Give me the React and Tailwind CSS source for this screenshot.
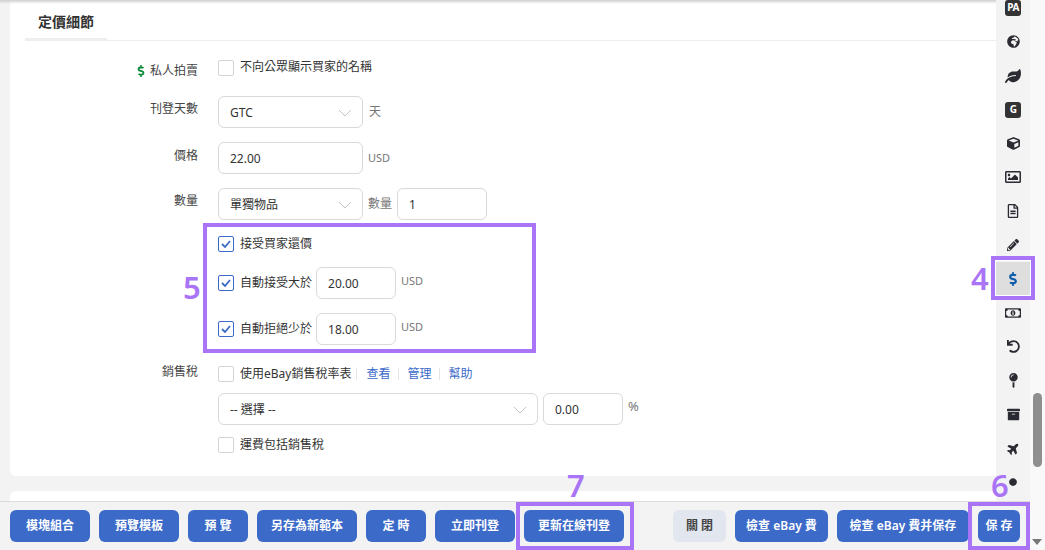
import {
  FaGlobeAfrica,
  FaLeaf,
  FaCube,
  FaRegImage,
  FaRegFileAlt,
  FaPencilAlt,
  FaDollarSign,
  FaRegMoneyBillAlt,
  FaUndo,
  FaMapPin,
  FaArchive,
  FaPlane,
  FaCircle,
} from "react-icons/fa";

const Chevron = () => (
  <svg width="14" height="8" viewBox="0 0 14 8" className="shrink-0">
    <polyline points="1,1 7,7 13,1" fill="none" stroke="#c4c4c4" strokeWidth="1" />
  </svg>
);

const Checkbox = ({ checked }) => (
  <span
    className={`flex h-4 w-4 shrink-0 items-center justify-center rounded-[2px] border bg-white ${
      checked ? "border-[#3b6ac9]" : "border-[#d4d4d4]"
    }`}
  >
    {checked && (
      <svg width="10" height="8" viewBox="0 0 10 8">
        <polyline points="1,4 4,7 9,1" fill="none" stroke="#3b6ac9" strokeWidth="1.8" />
      </svg>
    )}
  </span>
);

const Input = ({ value, className }) => (
  <div className={`flex h-8 items-center rounded-md border border-[#d9d9d9] bg-white pt-px pl-[11px] text-[12px] text-[#333] ${className}`}>
    {value}
  </div>
);

const Select = ({ value, className }) => (
  <div className={`flex h-8 items-center justify-between rounded-md border border-[#d9d9d9] bg-white pt-px pr-[10px] pl-[11px] text-[12px] text-[#333] ${className}`}>
    <span>{value}</span>
    <Chevron />
  </div>
);

// one form row: right aligned label + controls
const Row = ({ label, labelClass = "-mt-[6px]", className = "", children }) => (
  <div className={`flex h-8 items-center ${className}`}>
    <div className={`flex w-[188px] shrink-0 items-center justify-end gap-[3px] text-[12px] text-[#444] ${labelClass}`}>{label}</div>
    <div className="ml-5 flex items-center">{children}</div>
  </div>
);

const Unit = ({ children, className = "" }) => <span className={`text-[11px] text-[#777] ${className}`}>{children}</span>;

const Btn = ({ w, children, gray }) => (
  <button
    className={`flex h-8 shrink-0 items-center justify-center rounded-md text-[12px] font-semibold ${w} ${
      gray ? "bg-[#e2e6ee] text-[#444]" : "bg-[#3b6ac9] text-white"
    }`}
  >
    {children}
  </button>
);

const Badge = ({ children }) => (
  <span className="flex h-4 w-4 items-center justify-center rounded-[3px] bg-[#333] text-[10px] font-bold tracking-tighter text-white">{children}</span>
);

const sideIcons = [
  <Badge>PA</Badge>,
  <FaGlobeAfrica size={13} />,
  <FaLeaf size={16} />,
  <Badge>G</Badge>,
  <FaCube size={13} />,
  <FaRegImage size={16} />,
  <FaRegFileAlt size={14} />,
  <FaPencilAlt size={12} />,
  <FaDollarSign size={14} className="text-[#0b5cad]" />,
  <FaRegMoneyBillAlt size={16} />,
  <FaUndo size={13} />,
  <FaMapPin size={15} />,
  <FaArchive size={13} />,
  <FaPlane size={13} className="-rotate-45" />,
  <FaCircle size={8} />,
];

const Mark = ({ className }) => <div className={`pointer-events-none absolute border-4 border-[#a975f6] ${className}`} />;
const Num = ({ className, children }) => (
  <div className={`absolute text-[31px] leading-none font-semibold text-[#a975f6] ${className}`}>{children}</div>
);

export default function App() {
  return (
    <div
      className="relative flex h-[550px] w-[1045px] overflow-hidden bg-[#f3f3f3]"
      style={{ fontFamily: '"Noto Sans", "Noto Sans CJK TC", sans-serif' }}
    >
      <div className="flex w-[1030px] flex-col">
        <div className="flex min-h-0 flex-1">
          {/* main column */}
          <div className="min-w-0 flex-1 overflow-hidden pl-[10px]">
            <div className="h-[476px] rounded-bl-md bg-white">
              <div className="ml-[15px] flex h-[41px] border-b border-[#eee] pt-[12px]">
                <div className="h-[29px] w-[82px] border-b-[3px] border-[#eee] pl-[13px] text-[14px] leading-5 font-bold text-[#333]">
                  定價細節
                </div>
              </div>

              <Row
                className="mt-[11px]"
                labelClass="mt-[5px]"
                label={
                  <>
                    <FaDollarSign size={12} className="text-[#0a8a3a]" />
                    私人拍賣
                  </>
                }
              >
                <Checkbox />
                <span className="-mt-[2px] ml-[6px] text-[12px] text-[#333]">不向公眾顯示買家的名稱</span>
              </Row>
              <Row className="mt-3" label="刊登天數">
                <Select value="GTC" className="w-[145px]" />
                <Unit className="ml-[6px] text-[12px]">天</Unit>
              </Row>
              <Row className="mt-[14px]" label="價格" labelClass="-mt-[5px]">
                <Input value="22.00" className="w-[145px]" />
                <Unit className="ml-[5px]">USD</Unit>
              </Row>
              <Row className="mt-[14px]" label="數量">
                <Select value="單獨物品" className="w-[145px]" />
                <Unit className="ml-[5px] text-[12px]">數量</Unit>
                <Input value="1" className="ml-[5px] w-[90px]" />
              </Row>

              <Row className="mt-2" label="">
                <Checkbox checked />
                <span className="-mt-px ml-[6px] text-[12px] text-[#333]">接受買家還價</span>
              </Row>
              <Row className="mt-[7px]" label="">
                <Checkbox checked />
                <span className="-mt-px ml-[6px] text-[12px] text-[#333]">自動接受大於</span>
                <Input value="20.00" className="ml-1 w-20" />
                <Unit className="-mt-[3px] ml-[5px]">USD</Unit>
              </Row>
              <Row className="mt-[14px]" label="">
                <Checkbox checked />
                <span className="-mt-px ml-[6px] text-[12px] text-[#333]">自動拒絕少於</span>
                <Input value="18.00" className="ml-1 w-20" />
                <Unit className="-mt-[3px] ml-[5px]">USD</Unit>
              </Row>

              <Row className="mt-[13px]" label="銷售稅" labelClass="-mt-[4px]">
                <Checkbox />
                <span className="ml-[6px] text-[12px] text-[#333]">使用eBay銷售稅率表</span>
                <span className="ml-[5px] h-3 border-l border-[#e5e5e5]" />
                <a className="ml-[9px] text-[12px] text-[#3b6ac9]">查看</a>
                <span className="ml-2 h-3 border-l border-[#e5e5e5]" />
                <a className="ml-2 text-[12px] text-[#3b6ac9]">管理</a>
                <span className="ml-2 h-3 border-l border-[#e5e5e5]" />
                <a className="ml-2 text-[12px] text-[#3b6ac9]">幫助</a>
              </Row>
              <Row className="mt-[3px]" label="">
                <Select value="-- 選擇 --" className="w-[320px]" />
                <Input value="0.00" className="ml-[5px] w-20" />
                <Unit className="-mt-1 ml-[5px] text-[13px]">%</Unit>
              </Row>
              <Row className="mt-[4px]" label="">
                <Checkbox />
                <span className="ml-[6px] text-[12px] text-[#333]">運費包括銷售稅</span>
              </Row>
            </div>
            <div className="mt-[15px] h-10 rounded-tl-md bg-white" />
          </div>

          {/* icon rail */}
          <div className="-mt-[9px] w-[34px] shrink-0 text-[#2b2b33]">
            {sideIcons.map((icon, i) => (
              <div
                key={i}
                className={`flex h-[33.9px] items-center justify-center ${i === 8 ? "bg-[#dedede]" : ""}`}
              >
                {icon}
              </div>
            ))}
          </div>
        </div>

        {/* bottom action bar */}
        <div className="flex h-[49px] shrink-0 items-start gap-[9px] border-t border-[#dcdcdc] bg-[#f3f3f3] pt-2 pl-[10px]">
          <Btn w="w-20">模塊組合</Btn>
          <Btn w="w-20">預覽模板</Btn>
          <Btn w="w-[60px]">預 覽</Btn>
          <Btn w="w-[100px]">另存為新範本</Btn>
          <Btn w="w-[60px]">定 時</Btn>
          <Btn w="w-20">立即刊登</Btn>
          <Btn w="w-[100px]">更新在線刊登</Btn>
          <div className="w-[31px]" />
          <Btn w="w-[53px]" gray>關 閉</Btn>
          <Btn w="w-[93px]">檢查 eBay 費</Btn>
          <Btn w="w-[132px]">檢查 eBay 費并保存</Btn>
          <Btn w="w-[42px]">保 存</Btn>
        </div>
      </div>

      {/* page scrollbar */}
      <div className="relative w-[15px] shrink-0 bg-[#f9f9f9]">
        <div className="absolute top-[393px] left-[3px] h-[74px] w-[9px] rounded-full bg-[#8f8f8f]" />
        <div className="absolute right-[3px] bottom-[5px] h-0 w-0 border-x-[5px] border-t-[6px] border-x-transparent border-t-[#777]" />
      </div>

      {/* shadow of the header above */}
      <div className="absolute top-0 left-0 h-[4px] w-[996px] bg-gradient-to-b from-[#cfcfcf] to-transparent" />

      {/* annotations */}
      <Mark className="top-[223px] left-[203px] h-[130px] w-[333px]" />
      <Mark className="top-[256px] left-[991px] h-[44px] w-[44px] shadow-[inset_0_0_0_1px_#fff]" />
      <Mark className="top-[502px] left-[516px] h-[48px] w-[118px]" />
      <Mark className="top-[502px] left-[968px] h-[48px] w-[62px]" />
      <Num className="top-[272px] left-[183px]">5</Num>
      <Num className="top-[263px] left-[971px]">4</Num>
      <Num className="top-[470px] left-[567px]">7</Num>
      <Num className="top-[470px] left-[991px]">6</Num>
    </div>
  );
}
